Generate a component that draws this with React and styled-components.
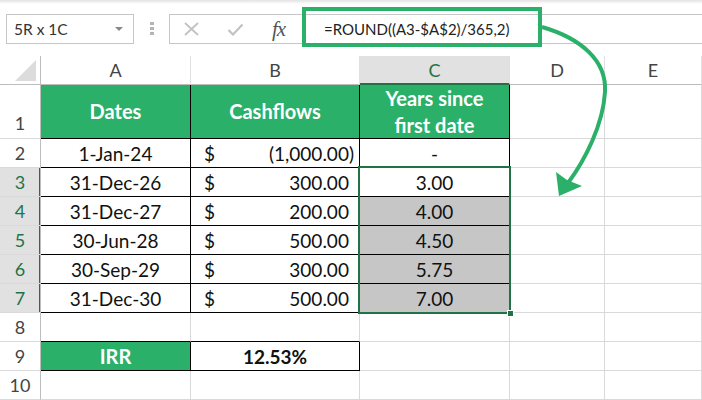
import React from 'react';
import styled, { createGlobalStyle } from 'styled-components';

const GREEN = '#2ab069';
const SEL = '#217346';
const GRID = '#d9d9d9';

const Global = createGlobalStyle`
    body {
        margin: 0;
        background: #fff;
        font-family: Lato, "Liberation Sans", sans-serif;
    }
`;

const Page = styled.div`
    position: relative;
    width: 702px;
    height: 400px;
    overflow: hidden;
`;

const Toolbar = styled.div`
    height: 56px;
    box-sizing: border-box;
    padding: 14px 0 0 6px;
    display: flex;
    align-items: flex-start;
    background: linear-gradient(#e2e2e2, #fff 4px);
`;

const NameBox = styled.div`
    width: 128px;
    height: 30px;
    box-sizing: border-box;
    border: 1px solid #c6c6c6;
    display: flex;
    align-items: center;
    justify-content: space-between;
    padding: 0 10px 0 7px;
    font-size: 15.5px;
    color: #333;
`;

const Caret = styled.span`
    width: 0;
    height: 0;
    border-left: 4px solid transparent;
    border-right: 4px solid transparent;
    border-top: 4px solid #888;
`;

const Grip = styled.div`
    margin: 8px 15px 0 16px;
    display: flex;
    flex-direction: column;
    gap: 2px;

    & span {
        width: 4px;
        height: 3px;
        background: #b4b4b4;
    }
`;

const FxBox = styled.div`
    flex: 1;
    height: 30px;
    box-sizing: border-box;
    border: 1px solid #c6c6c6;
    border-right: none;
    display: flex;
`;

const Tools = styled.div`
    width: 132px;
    flex: none;
    box-sizing: border-box;
    display: flex;
    align-items: center;
    padding-left: 14px;
    gap: 28px;
`;

const Fx = styled.span`
    font-family: "Liberation Serif", serif;
    font-style: italic;
    font-size: 21px;
    color: #555;
    letter-spacing: -1px;
`;

const Formula = styled.div`
    position: relative;
    flex: 1;
    display: flex;
    align-items: center;
    padding-left: 22px;
    font-size: 15px;
    color: #222;
`;

const Highlight = styled.span`
    position: absolute;
    left: 0;
    top: -8px;
    width: 240px;
    height: 40px;
    box-sizing: border-box;
    border: 4px solid ${GREEN};
`;

const Sheet = styled.div`
    display: grid;
    grid-template-columns: 41px 150px 169px 150px 95px 1fr;
    grid-template-rows: 29px 54px repeat(9, 29px);
    font-size: 19px;
`;

const Corner = styled.div`
    grid-row: 1;
    grid-column: 1;
    position: relative;
    border-right: 1px solid #bdbdbd;
    border-bottom: 1px solid #bdbdbd;

    &::after {
        content: '';
        position: absolute;
        right: 4px;
        bottom: 3px;
        border-left: 21px solid transparent;
        border-bottom: 21px solid #dcdcdc;
    }
`;

const ColHead = styled.div`
    grid-row: 1;
    grid-column: ${p => p.$gc};
    display: flex;
    align-items: center;
    justify-content: center;
    box-sizing: border-box;
    font-size: 18px;
    color: ${p => (p.$on ? SEL : '#444')};
    background: ${p => (p.$on ? '#e1e1e1' : '#fff')};
    border-right: 1px solid #e0e0e0;
    border-bottom: ${p => (p.$on ? `2px solid ${SEL}` : '1px solid #bdbdbd')};
`;

const RowHead = styled.div`
    grid-row: ${p => p.$gr};
    grid-column: 1;
    display: flex;
    align-items: ${p => (p.$tall ? 'flex-end' : 'center')};
    justify-content: center;
    padding-bottom: ${p => (p.$tall ? '4px' : '0')};
    box-sizing: border-box;
    font-size: 18px;
    color: ${p => (p.$on ? SEL : '#444')};
    background: ${p => (p.$on ? '#e1e1e1' : '#fff')};
    border-right: 1px solid #bdbdbd;
    border-bottom: 1px solid ${GRID};
    box-shadow: ${p => (p.$on ? `inset -1px 0 ${SEL}` : 'none')};
`;

const Cell = styled.div`
    grid-row: ${p => p.$gr};
    grid-column: ${p => p.$gc};
    display: flex;
    align-items: center;
    justify-content: ${p => p.$align || 'center'};
    box-sizing: border-box;
    padding: ${p => p.$pad || '0'};
    text-align: center;
    line-height: 27px;
    font-size: ${p => (p.$head ? '20px' : '19px')};
    color: ${p => (p.$head ? '#fff' : '#111')};
    font-weight: ${p => (p.$bold ? 700 : 400)};
    background: ${p => p.$bg};
    border-right: 1px solid ${p => p.$r};
    border-bottom: 1px solid ${p => p.$b};
`;

const Hidden = styled.span`
    visibility: hidden;
`;

const Selection = styled.div`
    grid-column: 4 / 5;
    grid-row: 4 / 9;
    margin: -2px -1px -1px -2px;
    border: 2px solid ${SEL};
    position: relative;
    pointer-events: none;

    &::after {
        content: '';
        position: absolute;
        right: -5px;
        bottom: -5px;
        width: 5px;
        height: 5px;
        background: ${SEL};
        border: 1px solid #fff;
    }
`;

const Arrow = styled.svg`
    position: absolute;
    left: 0;
    top: 0;
    pointer-events: none;
`;

const cols = ['A', 'B', 'C', 'D', 'E'];

const data = {
    1: [{ t: 'Dates', k: 'head' }, { t: 'Cashflows', k: 'head' }, { t: 'Years since first date', k: 'head' }],
    2: [{ t: '1-Jan-24' }, { t: '(1,000.00)', k: 'acct', neg: true }, { t: '-' }],
    3: [{ t: '31-Dec-26' }, { t: '300.00', k: 'acct' }, { t: '3.00' }],
    4: [{ t: '31-Dec-27' }, { t: '200.00', k: 'acct' }, { t: '4.00', sel: true }],
    5: [{ t: '30-Jun-28' }, { t: '500.00', k: 'acct' }, { t: '4.50', sel: true }],
    6: [{ t: '30-Sep-29' }, { t: '300.00', k: 'acct' }, { t: '5.75', sel: true }],
    7: [{ t: '31-Dec-30' }, { t: '500.00', k: 'acct' }, { t: '7.00', sel: true }],
    9: [{ t: 'IRR', k: 'head' }, { t: '12.53%', k: 'pct' }],
};

const boxed = (r, c) => !!(data[r] && data[r][c]);

function renderCell(r, c) {
    const d = data[r] && data[r][c];
    const pos = { $gr: r + 1, $gc: c + 2 };
    const right = boxed(r, c) || boxed(r, c + 1) ? '#000' : GRID;
    const bottom = boxed(r, c) || boxed(r + 1, c) ? '#000' : GRID;
    const key = `${r}-${c}`;

    if (!d) return <Cell key={key} {...pos} $r={right} $b={bottom} $bg="#fff" />;

    if (d.k === 'acct') {
        return (
            <Cell key={key} {...pos} $r={right} $b={bottom} $bg="#fff" $align="space-between" $pad="0 5px 0 13px">
                <span>$</span>
                <span>
                    {d.t}
                    {!d.neg && <Hidden>)</Hidden>}
                </span>
            </Cell>
        );
    }

    return (
        <Cell
            key={key}
            {...pos}
            $r={right}
            $b={bottom}
            $bg={d.k === 'head' ? GREEN : d.sel ? '#c6c6c6' : '#fff'}
            $head={d.k === 'head'}
            $bold={d.k === 'head' || d.k === 'pct'}
            $pad={d.k === 'head' ? '0 18px' : '0'}
        >
            {d.t}
        </Cell>
    );
}

const Check = () => (
    <svg width="17" height="13" viewBox="0 0 17 13">
        <path d="M1.5 7 L6 11.5 L15.5 1.5" fill="none" stroke="#c2c2c2" strokeWidth="2.2" />
    </svg>
);

const Cross = () => (
    <svg width="15" height="14" viewBox="0 0 15 14">
        <path d="M1 1 L14 13 M14 1 L1 13" fill="none" stroke="#c2c2c2" strokeWidth="1.8" />
    </svg>
);

export default function App() {
    const rows = [1, 2, 3, 4, 5, 6, 7, 8, 9, 10];
    return (
        <Page>
            <Global />
            <Toolbar>
                <NameBox>
                    5R x 1C
                    <Caret />
                </NameBox>
                <Grip>
                    <span />
                    <span />
                    <span />
                </Grip>
                <FxBox>
                    <Tools>
                        <Cross />
                        <Check />
                        <Fx>fx</Fx>
                    </Tools>
                    <Formula>
                        =ROUND((A3-$A$2)/365,2)
                        <Highlight />
                    </Formula>
                </FxBox>
            </Toolbar>

            <Sheet>
                <Corner />
                {cols.map((c, i) => (
                    <ColHead key={c} $gc={i + 2} $on={c === 'C'}>
                        {c}
                    </ColHead>
                ))}
                {rows.map((r) => (
                    <React.Fragment key={r}>
                        <RowHead $gr={r + 1} $on={r >= 3 && r <= 7} $tall={r === 1}>
                            {r}
                        </RowHead>
                        {cols.map((_, c) => renderCell(r, c))}
                    </React.Fragment>
                ))}
                <Selection />
            </Sheet>

            <Arrow width="702" height="400" viewBox="0 0 702 400">
                <path
                    d="M542 27 C580 38 607 60 605 92 C603 125 585 160 568 183"
                    fill="none"
                    stroke={GREEN}
                    strokeWidth="4"
                />
                <path d="M559 196 L556 172 L567 180 L582 186 Z" fill={GREEN} />
            </Arrow>
        </Page>
    );
}
